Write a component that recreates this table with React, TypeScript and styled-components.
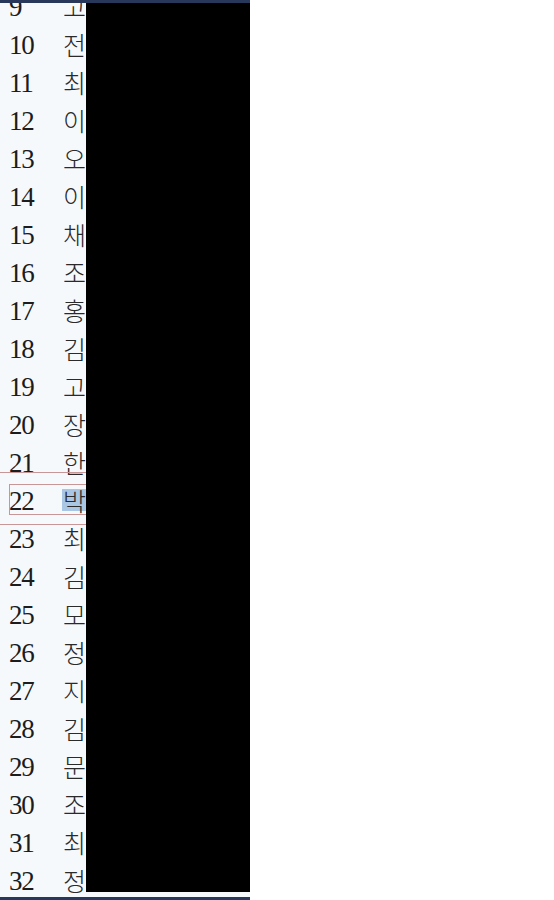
import React from "react";
import styled, { createGlobalStyle } from "styled-components";

const GlobalStyle = createGlobalStyle`
  html, body { margin: 0; padding: 0; background: #ffffff; }
  body { font-family: "Liberation Serif", serif; }
`;

const Page = styled.div`
  width: 554px;
  height: 900px;
  display: flex;
  background: #ffffff;
`;

const Panel = styled.div`
  position: relative;
  width: 250px;
  height: 900px;
  display: flex;
  flex-direction: column;
`;

const NavBar = styled.div`
  height: 3px;
  flex: none;
  background: #27385a;
`;

const Viewport = styled.div`
  flex: 1;
  overflow: hidden;
  background: #f6f9fc;
`;

const List = styled.ul`
  list-style: none;
  margin: -15px 0 0 0;
  padding: 0;
`;

const Row = styled.li<{ $selected?: boolean }>`
  position: relative;
  height: 38px;
  display: flex;
  align-items: flex-start;

  ${({ $selected }) =>
    $selected &&
    `
    &::before {
      content: "";
      position: absolute;
      left: 0;
      right: 0;
      top: -10px;
      height: 51px;
      border-top: 1px solid #c79696;
      border-bottom: 1px solid #c79696;
      pointer-events: none;
    }
    &::after {
      content: "";
      position: absolute;
      left: 9px;
      right: 0;
      top: 2px;
      height: 29px;
      border: 1px solid #c79696;
      border-right: none;
      pointer-events: none;
    }
  `}
`;

const Num = styled.span`
  width: 62px;
  padding-left: 9px;
  box-sizing: border-box;
  font-family: "Liberation Serif", "Times New Roman", serif;
  font-size: 27px;
  line-height: 38px;
  letter-spacing: -1.2px;
  color: #1c1c1c;
`;

const Name = styled.span<{ $selected?: boolean }>`
  margin-top: 7px;
  height: 22px;
  font-family: "Noto Sans CJK KR", "Noto Sans", sans-serif;
  font-weight: 300;
  font-size: 25px;
  line-height: 22px;
  color: #2a2a2a;
  white-space: nowrap;
  padding: 0 1px;
  background: ${({ $selected }) => ($selected ? "#a9c6e4" : "transparent")};
`;

const Redaction = styled.div`
  position: absolute;
  left: 86px;
  top: 3px;
  width: 164px;
  height: 889px;
  background: #000000;
`;

const rows: [number, string][] = [
  [9, "고"], [10, "전"], [11, "최"], [12, "이"], [13, "오"], [14, "이"],
  [15, "채"], [16, "조"], [17, "홍"], [18, "김"], [19, "고"], [20, "장"],
  [21, "한"], [22, "박"], [23, "최"], [24, "김"], [25, "모"], [26, "정"],
  [27, "지"], [28, "김"], [29, "문"], [30, "조"], [31, "최"], [32, "정"],
];

export default function App() {
  return (
    <>
      <GlobalStyle />
      <Page>
        <Panel>
          <NavBar />
          <Viewport>
            <List>
              {rows.map(([n, name]) => (
                <Row key={n} $selected={n === 22}>
                  <Num>{n}</Num>
                  <Name $selected={n === 22}>{name}</Name>
                </Row>
              ))}
            </List>
          </Viewport>
          <NavBar />
          <Redaction />
        </Panel>
      </Page>
    </>
  );
}
